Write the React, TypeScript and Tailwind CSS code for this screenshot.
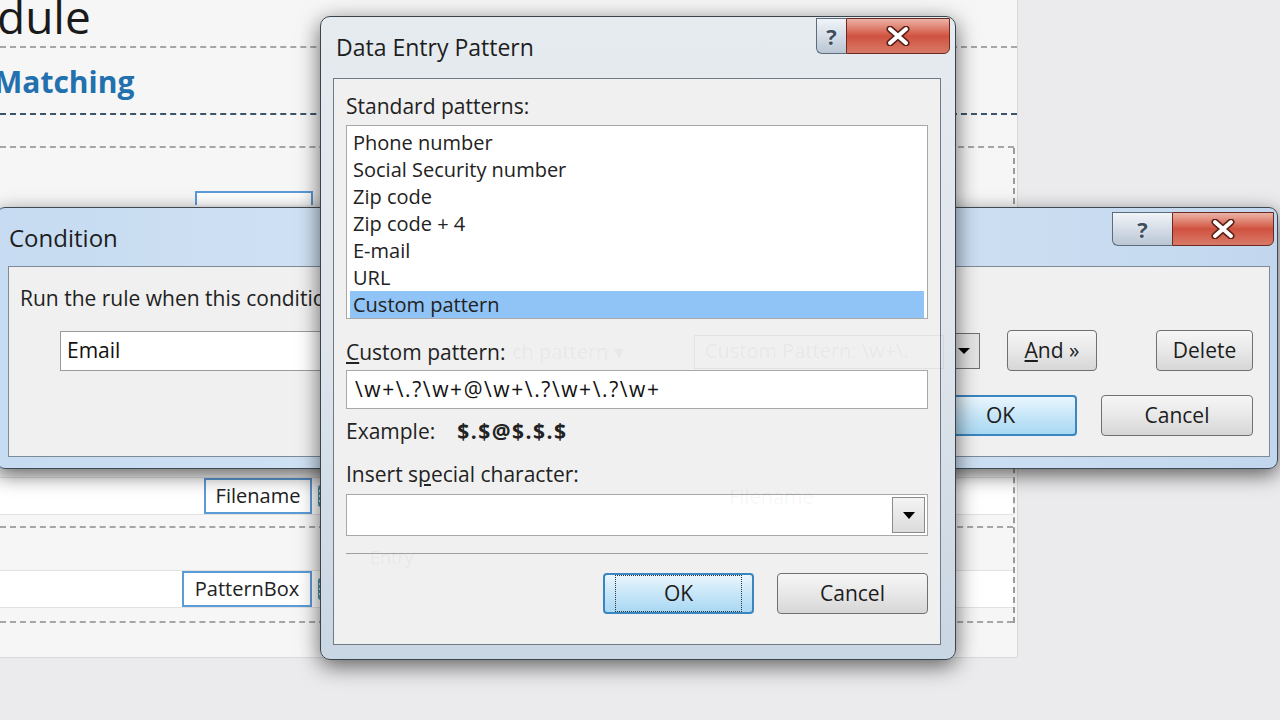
import React from 'react'

const font = { fontFamily: '"Open Sans", "Noto Sans", sans-serif' }

function HelpButton({ w }: { w: string }) {
  return (
    <div className={`${w} h-full flex items-center justify-center rounded-bl-[6px] border border-r-0 border-[#5d6b7a] bg-gradient-to-b from-[#f1f4f8] via-[#d5dde7] to-[#b9c6d4]`}>
      <span className="text-[22px] leading-none font-bold text-[#3d4e60]" style={{ textShadow: '0 0 2px #fff' }}>?</span>
    </div>
  )
}

function CloseButton({ w }: { w: string }) {
  return (
    <div className={`${w} h-full flex items-center justify-center rounded-br-[6px] border border-[#6a2a22] bg-gradient-to-b from-[#eab3a6] via-[#d0513f] to-[#d77a68]`}>
      <svg width="26" height="20" viewBox="0 0 26 20">
        <path d="M5 3 L21 17 M21 3 L5 17" stroke="#5a2018" strokeWidth="7" strokeLinecap="round" />
        <path d="M5 3 L21 17 M21 3 L5 17" stroke="#ffffff" strokeWidth="4" strokeLinecap="round" />
      </svg>
    </div>
  )
}

function WinButton({ children, w, focus }: { children: React.ReactNode; w: string; focus?: boolean }) {
  return (
    <div
      className={`${w} h-[41px] flex items-center justify-center rounded-[4px] text-[21px] text-[#1c1c1c] ${
        focus
          ? 'border-2 border-[#3a86c0] bg-gradient-to-b from-[#eaf6fd] via-[#c7e6f8] to-[#a9d8f3]'
          : 'border border-[#707070] bg-gradient-to-b from-[#f6f6f6] via-[#e8e8e8] to-[#d6d6d6]'
      }`}
    >
      {children}
    </div>
  )
}

function FieldTag({ label, w }: { label: string; w: string }) {
  return (
    <div className="flex items-center">
      <div className={`${w} h-[36px] flex items-center justify-center border-2 border-[#5b9bd8] bg-white text-[20px] text-[#222]`}>
        {label}
      </div>
      <div className="ml-[6px] w-[10px] h-[22px] rounded-[3px] bg-[#4a9aa6] flex flex-col justify-center gap-[3px] px-[1px]">
        <div className="h-[2px] bg-[#d6eef0]" />
        <div className="h-[2px] bg-[#d6eef0]" />
        <div className="h-[2px] bg-[#d6eef0]" />
      </div>
    </div>
  )
}

function ConditionDialog() {
  return (
    <div className="absolute left-[-4px] top-[207px] w-[1282px] h-[262px] rounded-[9px] border border-[#3f4a55] bg-gradient-to-r from-[#c6dbf1] via-[#d8e7f6] to-[#c2d7ee] shadow-[0_6px_20px_rgba(0,0,0,0.6)] flex flex-col pl-[11px] pr-[7px] pb-[11px]">
      <div className="h-[58px] flex items-start justify-between">
        <div className="pt-[12px] pl-[1px] text-[24px] text-[#1e1e1e]">Condition</div>
        <div className="h-[34px] mt-[4px] -mr-[4px] flex">
          <HelpButton w="w-[60px]" />
          <CloseButton w="w-[102px]" />
        </div>
      </div>
      <div className="flex-1 border border-[#7d8a98] bg-[#f0f0f0] flex flex-col">
        <div className="pt-[17px] pl-[11px] text-[21px] leading-[28px] text-[#222]">Run the rule when this condition is met:</div>
        <div className="mt-[18px] flex items-center pr-[16px]">
          <div className="ml-[51px] w-[272px] h-[40px] border border-[#9a9a9a] bg-white flex items-center pl-[6px] text-[21px] text-[#111]">
            Email
          </div>
          <div className="ml-auto w-[32px] h-[36px] border border-[#707070] bg-[#e4e4e4] flex items-center justify-center">
            <div className="w-0 h-0 border-l-[6px] border-r-[6px] border-t-[6px] border-l-transparent border-r-transparent border-t-black" />
          </div>
          <div className="ml-[27px]">
            <WinButton w="w-[90px]">
              <span><span className="underline">A</span>nd »</span>
            </WinButton>
          </div>
          <div className="ml-[59px]">
            <WinButton w="w-[97px]">Delete</WinButton>
          </div>
        </div>
        <div className="mt-[24px] flex justify-end gap-[24px] pr-[16px]">
          <WinButton w="w-[153px]" focus>OK</WinButton>
          <WinButton w="w-[152px]">Cancel</WinButton>
        </div>
      </div>
    </div>
  )
}

const patterns = ['Phone number', 'Social Security number', 'Zip code', 'Zip code + 4', 'E-mail', 'URL', 'Custom pattern']

function PatternDialog() {
  return (
    <div className="absolute left-[320px] top-[16px] w-[636px] h-[644px] rounded-[10px] border border-[#3b444d] bg-gradient-to-b from-[#e6ebf0] via-[#dfe5eb] to-[#c9d6e3] shadow-[0_6px_22px_rgba(0,0,0,0.6)] flex flex-col pl-[12px] pr-[14px] pb-[14px]">
      <div className="h-[61px] flex items-start justify-between">
        <div className="pt-[13px] pl-[3px] text-[23px] text-[#1e1e1e]">Data Entry Pattern</div>
        <div className="h-[36px] mt-[1px] -mr-[9px] flex">
          <HelpButton w="w-[30px]" />
          <CloseButton w="w-[104px]" />
        </div>
      </div>
      <div className="relative flex-1 border border-[#6f7a86] bg-[#f0f0f0] flex flex-col px-[12px] text-[#222]">
        <div className="pt-[13px] text-[21px] leading-[28px]">Standard patterns:</div>
        <div className="mt-[5px] h-[194px] border border-[#a8a8a8] bg-white pt-[3px] px-[3px] flex flex-col">
          {patterns.map((p) => (
            <div
              key={p}
              className={`h-[27px] leading-[27px] flex items-center pl-[3px] text-[20px] ${p === 'Custom pattern' ? 'bg-[#90c4f7]' : ''}`}
            >
              {p}
            </div>
          ))}
        </div>
        <div className="mt-[19px] text-[21px] leading-[28px]">
          <span className="underline">C</span>ustom pattern:
        </div>
        <div className="mt-[4px] h-[39px] border border-[#a8a8a8] bg-white flex items-center pl-[8px] text-[21px] tracking-[1.6px] text-[#111]">
          {'\\w+\\.?\\w+@\\w+\\.?\\w+\\.?\\w+'}
        </div>
        <div className="mt-[8px] text-[21px] leading-[28px] flex">
          <span>Example:</span>
          <span className="ml-[22px] font-bold tracking-[1.5px]">$.$@$.$.$</span>
        </div>
        <div className="mt-[15px] text-[21px] leading-[28px]">
          Insert s<span className="underline">p</span>ecial character:
        </div>
        <div className="mt-[6px] h-[42px] border border-[#a8a8a8] bg-white flex items-center justify-end pr-[2px]">
          <div className="w-[33px] h-[36px] border border-[#8a8a8a] bg-gradient-to-b from-[#f4f4f4] to-[#dcdcdc] flex items-center justify-center">
            <div className="w-0 h-0 border-l-[6px] border-r-[6px] border-t-[7px] border-l-transparent border-r-transparent border-t-black" />
          </div>
        </div>
        <div className="mt-[17px] h-px bg-[#a0a0a0]" />
        <div className="mt-[19px] flex justify-end gap-[23px]">
          <WinButton w="w-[151px]" focus>
            <span className="px-[50px] py-[4px] outline outline-1 outline-dotted outline-[#333] -outline-offset-2">OK</span>
          </WinButton>
          <WinButton w="w-[151px]">Cancel</WinButton>
        </div>
        <div className="pointer-events-none absolute left-[178px] top-[258px] text-[20px] text-black/[0.05]">ch pattern ▾</div>
        <div className="pointer-events-none absolute left-[360px] top-[256px] w-[250px] h-[34px] border border-black/[0.05] pl-[10px] text-[20px] text-black/[0.05] overflow-hidden whitespace-nowrap">Custom Pattern: \w+\.</div>
        <div className="pointer-events-none absolute left-[395px] top-[403px] text-[20px] text-black/[0.05]">Filename</div>
        <div className="pointer-events-none absolute left-[36px] top-[465px] text-[18px] text-black/[0.05]">Entry</div>
      </div>
    </div>
  )
}

export default function App() {
  return (
    <div className="relative w-[1280px] h-[720px] overflow-hidden bg-[#ebebed]" style={font}>
      <div className="w-[1018px] h-[658px] bg-[#f6f6f6] border-r border-b border-[#dadada] flex flex-col">
        <div className="h-[48px] border-b-2 border-dashed border-[#a6a6a6] overflow-hidden">
          <div className="-mt-[12px] -ml-[3px] text-[46px] leading-[56px] text-[#1a1a1a]">dule</div>
        </div>
        <div className="h-[67px] border-b-2 border-dashed border-[#3d556b] flex items-center">
          <div className="-ml-[6px] pt-[2px] text-[30px] font-bold text-[#2270ad]">Matching</div>
        </div>
        <div className="h-[33px] border-b-2 border-dashed border-[#a6a6a6] w-[1014px]" />
        <div className="w-[1015px] h-[475px] border-r-2 border-dashed border-[#9a9a9a] flex flex-col">
          <div className="h-[57px] flex items-end pl-[195px]">
            <div className="w-[118px] h-[14px] border-2 border-b-0 border-[#5b9bd8] bg-white" />
          </div>
          <div className="h-[272px]" />
          <div className="h-[38px] bg-white border-y border-[#e2e2e2] flex items-center pl-[204px]">
            <FieldTag label="Filename" w="w-[108px]" />
          </div>
          <div className="h-[11px]" />
          <div className="border-b-2 border-dashed border-[#a6a6a6]" />
          <div className="h-[42px]" />
          <div className="h-[38px] bg-white border-y border-[#e2e2e2] flex items-center pl-[182px]">
            <FieldTag label="PatternBox" w="w-[130px]" />
          </div>
          <div className="flex-1" />
          <div className="border-b-2 border-dashed border-[#a6a6a6]" />
        </div>
      </div>
      <ConditionDialog />
      <PatternDialog />
    </div>
  )
}
